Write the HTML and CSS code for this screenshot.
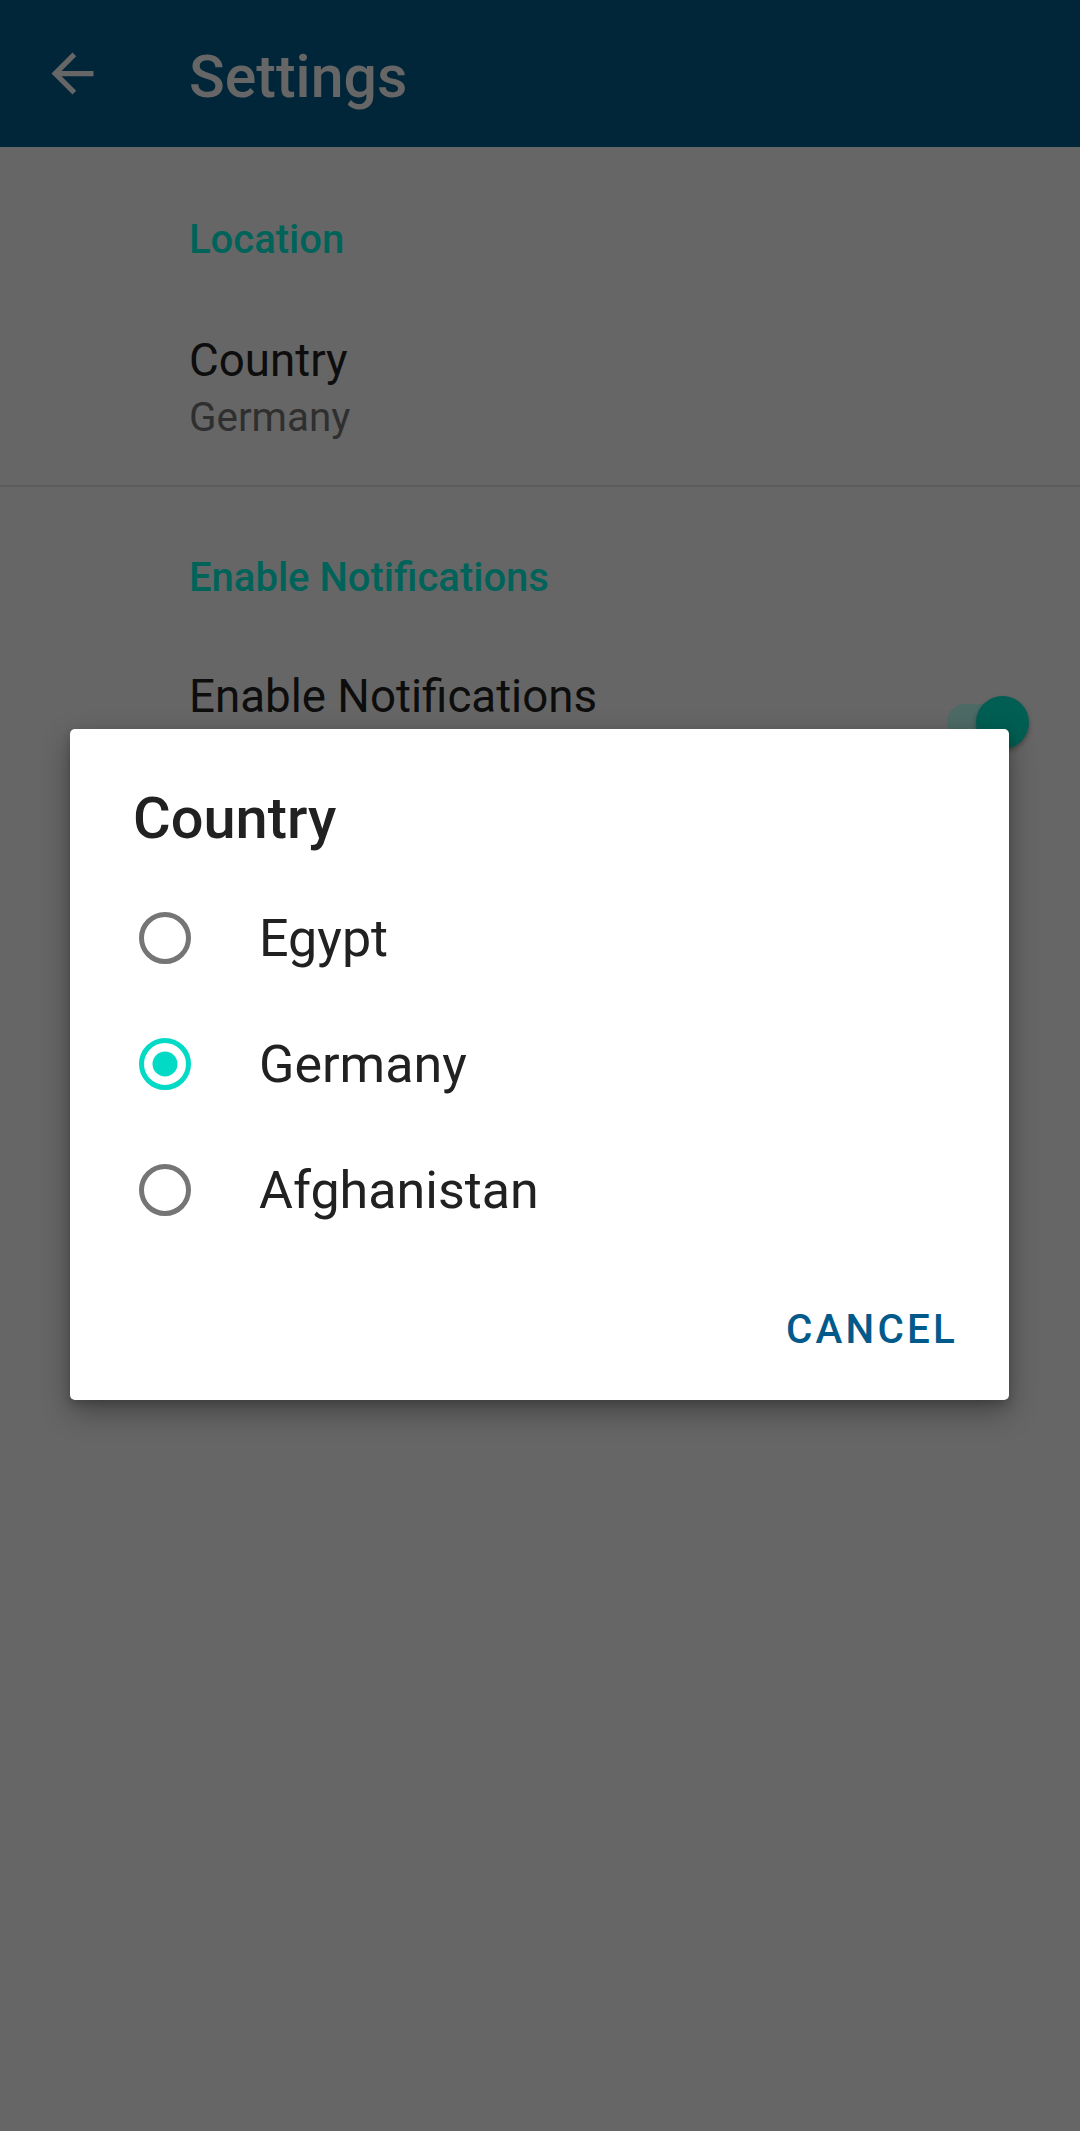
FILE: index.html
```html
<!DOCTYPE html>
<html>
<head>
<meta charset="utf-8">
<link rel="stylesheet" href="styles.css">
</head>
<body>
<div class="toolbar">
  <svg class="back" viewBox="0 0 24 24" width="63" height="63"><path d="M20 11H7.83l5.59-5.59L12 4l-8 8 8 8 1.41-1.41L7.83 13H20v-2z" fill="#666666"/></svg>
  <div class="title">Settings</div>
</div>
<div class="content">
  <div class="section">
    <div class="cat cat-first">Location</div>
    <div class="item-title item-first">Country</div>
    <div class="item-sub">Germany</div>
  </div>
  <div class="divider"></div>
  <div class="section">
    <div class="cat cat-second">Enable Notifications</div>
    <div class="row">
      <div class="item-title item-second">Enable Notifications</div>
      <div class="switch"><div class="track"></div><div class="thumb"></div></div>
    </div>
  </div>
</div>

<div class="dialog">
  <div class="d-title">Country</div>
  <div class="options">
    <div class="opt">
      <svg class="radio" viewBox="0 0 52 52" width="52" height="52"><circle cx="26" cy="26" r="23.5" fill="none" stroke="#757575" stroke-width="5"/></svg>
      <span class="opt-label">Egypt</span>
    </div>
    <div class="opt">
      <svg class="radio" viewBox="0 0 52 52" width="52" height="52"><circle cx="26" cy="26" r="23.5" fill="none" stroke="#03DAC5" stroke-width="5"/><circle cx="26" cy="26" r="12.5" fill="#03DAC5"/></svg>
      <span class="opt-label">Germany</span>
    </div>
    <div class="opt">
      <svg class="radio" viewBox="0 0 52 52" width="52" height="52"><circle cx="26" cy="26" r="23.5" fill="none" stroke="#757575" stroke-width="5"/></svg>
      <span class="opt-label">Afghanistan</span>
    </div>
  </div>
  <div class="actions"><span class="btn">CANCEL</span></div>
</div>
</body>
</html>
```
FILE: styles.css
```css
html, body {
  margin: 0;
  padding: 0;
}
body {
  background: #666666;
  font-family: Roboto, "Noto Sans", sans-serif;
  width: 1080px;
  height: 2131px;
  overflow: hidden;
  position: relative;
}
.toolbar {
  height: 147px;
  box-sizing: border-box;
  background: #022639;
  display: flex;
  align-items: flex-start;
  padding-top: 42px;
  padding-left: 41px;
}
.back {
  display: block;
  flex: none;
}
.title {
  margin-left: 85px;
  margin-top: 0.5px;
  font-size: 59px;
  line-height: 68px;
  font-weight: 500;
  color: #666666;
}
.content {
  padding-left: 189px;
}
.cat {
  font-size: 40px;
  line-height: 48px;
  font-weight: 500;
  color: #00635a;
}
.cat-first { padding-top: 68.6px; }
.cat-second { padding-top: 67.3px; }
.item-title {
  font-size: 45.7px;
  line-height: 54px;
  color: #0d0d0d;
}
.item-first { margin-top: 70.4px; }
.item-second { margin-top: 68px; }
.item-sub {
  margin-top: 6.3px;
  font-size: 40.4px;
  line-height: 48px;
  color: #2f2f2f;
}
.divider {
  margin-top: 42.8px;
  margin-left: -189px;
  height: 2px;
  background: #5b5b5b;
}
.row {
  display: flex;
  justify-content: space-between;
  align-items: flex-start;
}
.switch {
  position: relative;
  width: 82px;
  height: 53px;
  margin-top: 94px;
  margin-right: 51px;
}
.track {
  position: absolute;
  left: 0;
  top: 8px;
  width: 74px;
  height: 36px;
  border-radius: 18px;
  background: #4d6a65;
}
.thumb {
  position: absolute;
  right: 0;
  top: 0;
  width: 53px;
  height: 53px;
  border-radius: 50%;
  background: #005e52;
  box-shadow: 0 3px 5px rgba(0,0,0,0.3);
}
.dialog {
  position: absolute;
  left: 70px;
  top: 729px;
  width: 939px;
  height: 671px;
  box-sizing: border-box;
  background: #ffffff;
  border-radius: 5px;
  box-shadow: 0 12px 30px rgba(0,0,0,0.32), 0 4px 10px rgba(0,0,0,0.18);
  padding-top: 55px;
}
.d-title {
  padding-left: 63px;
  font-size: 57.75px;
  line-height: 68px;
  font-weight: 500;
  color: #212121;
}
.options {
  margin-top: 23px;
}
.opt {
  height: 126px;
  display: flex;
  align-items: center;
  padding-left: 69px;
}
.radio {
  display: block;
  flex: none;
}
.opt-label {
  margin-left: 68px;
  font-size: 52px;
  line-height: 61px;
  color: #212121;
}
.actions {
  margin-top: 52.5px;
  display: flex;
  justify-content: flex-end;
  padding-right: 51px;
}
.btn {
  font-size: 40.4px;
  line-height: 48px;
  font-weight: 500;
  letter-spacing: 3.2px;
  color: #025a8b;
}
```
